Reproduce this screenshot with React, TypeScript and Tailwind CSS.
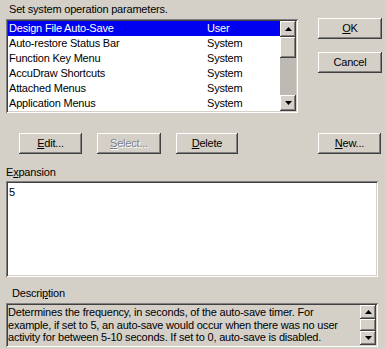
import React from "react";

const raised =
  "bg-[#d4d0c8] shadow-[inset_-1px_-1px_#404040,inset_1px_1px_#ffffff,inset_-2px_-2px_#808080,inset_2px_2px_#d4d0c8]";
const sunken =
  "shadow-[inset_1px_1px_#808080,inset_-1px_-1px_#ffffff,inset_2px_2px_#404040,inset_-2px_-2px_#d4d0c8]";

function Arrow({ down = false }: { down?: boolean }) {
  return (
    <svg width="7" height="4" viewBox="0 0 7 4" className="block">
      {down ? (
        <polygon points="0,0 7,0 3.5,4" fill="#000" />
      ) : (
        <polygon points="3.5,0 7,4 0,4" fill="#000" />
      )}
    </svg>
  );
}

function Btn({
  children,
  w,
  disabled = false,
}: {
  children: React.ReactNode;
  w: string;
  disabled?: boolean;
}) {
  return (
    <div
      className={`${raised} ${w} h-[21px] flex items-center justify-center leading-[13px] ${
        disabled ? "text-[#808080] [text-shadow:1px_1px_0_#ffffff]" : "text-black"
      }`}
    >
      {children}
    </div>
  );
}

const rows: [string, string][] = [
  ["Design File Auto-Save", "User"],
  ["Auto-restore Status Bar", "System"],
  ["Function Key Menu", "System"],
  ["AccuDraw Shortcuts", "System"],
  ["Attached Menus", "System"],
  ["Application Menus", "System"],
];

export default function App() {
  return (
    <div className="w-[385px] h-[349px] bg-[#d4d0c8] overflow-hidden text-[11px] tracking-[-0.2px] text-black font-['Liberation_Sans',Arial,sans-serif]">
      <div className="h-[18px] pl-[9px] pt-[2px] leading-[14px]">
        Set system operation parameters.
      </div>

      <div className="flex items-start h-[95px]">
        <div className={`ml-[6px] mt-[1px] w-[292px] h-[94px] p-[2px] bg-white flex ${sunken}`}>
          <div className="flex-1 flex flex-col">
            {rows.map(([a, b], i) => (
              <div
                key={a}
                className={`h-[15px] leading-[15px] flex ${
                  i === 0 ? "bg-[#0000f0] text-white" : "text-black"
                }`}
              >
                <span className="w-[199px] pl-[1px] whitespace-nowrap">{a}</span>
                <span className="whitespace-nowrap">{b}</span>
              </div>
            ))}
          </div>
          <div className="w-[16px] flex flex-col">
            <div className={`${raised} h-[16px] flex items-center justify-center`}>
              <Arrow />
            </div>
            <div className={`${raised} h-[21px]`} />
            <div className="flex-1 bg-[#bdbab3]" />
            <div className={`${raised} h-[16px] flex items-center justify-center`}>
              <Arrow down />
            </div>
          </div>
        </div>

        <div className="ml-[20px] flex flex-col gap-[13px]">
          <Btn w="w-[64px]">
            <span>
              <span className="underline underline-offset-[1px]">O</span>K
            </span>
          </Btn>
          <Btn w="w-[64px]">Cancel</Btn>
        </div>
      </div>

      <div className="flex mt-[20px]">
        <div className="ml-[19px]">
          <Btn w="w-[63px]">
            <span>
              <span className="underline underline-offset-[1px]">E</span>dit...
            </span>
          </Btn>
        </div>
        <div className="ml-[15px]">
          <Btn w="w-[64px]" disabled>
            <span>
              <span className="underline underline-offset-[1px]">S</span>elect...
            </span>
          </Btn>
        </div>
        <div className="ml-[15px]">
          <Btn w="w-[62px]">
            <span>
              <span className="underline underline-offset-[1px]">D</span>elete
            </span>
          </Btn>
        </div>
        <div className="ml-auto mr-[4px]">
          <Btn w="w-[63px]">
            <span>
              <span className="underline underline-offset-[1px]">N</span>ew...
            </span>
          </Btn>
        </div>
      </div>

      <div className="h-[27px] pl-[6px] pt-[12px] leading-[13px]">
        E<span className="underline underline-offset-[1px]">x</span>pansion
      </div>
      <div className={`ml-[6px] w-[372px] h-[96px] p-[2px] bg-white ${sunken}`}>
        <div className="pl-[1px] pt-[3px] leading-[13px]">5</div>
      </div>

      <div className="h-[26px] pl-[12px] pt-[10px] leading-[13px]">
        Descri<span className="underline underline-offset-[1px]">p</span>tion
      </div>
      <div className={`ml-[6px] w-[372px] h-[44px] p-[2px] flex ${sunken}`}>
        <div className="flex-1 pl-[0px] pt-[1px] leading-[12.5px] whitespace-nowrap overflow-hidden">
          <div>Determines the frequency, in seconds, of the auto-save timer. For</div>
          <div>example, if set to 5, an auto-save would occur when there was no user</div>
          <div>activity for between 5-10 seconds. If set to 0, auto-save is disabled.</div>
        </div>
        <div className="w-[16px] flex flex-col">
          <div className={`${raised} h-[14px] flex items-center justify-center`}>
            <Arrow />
          </div>
          <div className={`${raised} flex-1`} />
          <div className={`${raised} h-[14px] flex items-center justify-center`}>
            <Arrow down />
          </div>
        </div>
      </div>
    </div>
  );
}
